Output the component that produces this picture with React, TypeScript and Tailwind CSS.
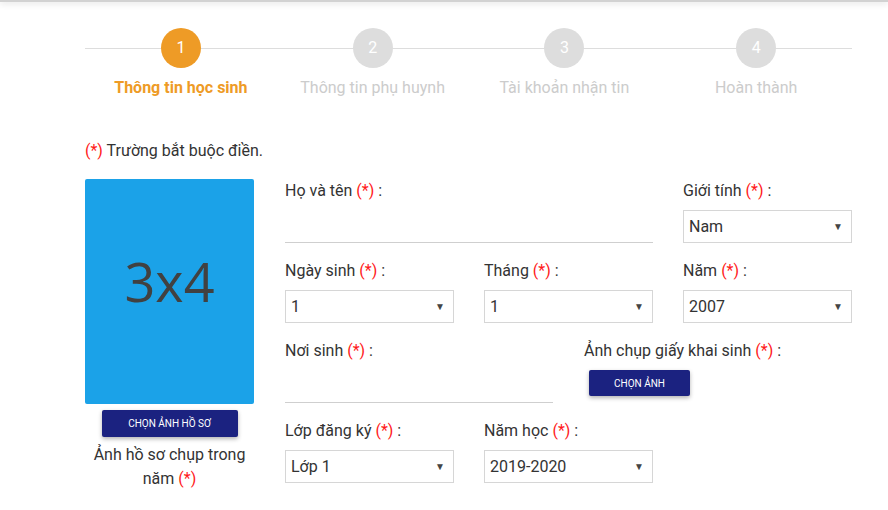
import React from "react";

const Req = () => <span className="text-[#ff1a1a]">(*)</span>;

const Label = ({ text }: { text: string }) => (
  <div className="h-6 text-[16px] leading-6 text-[#333] whitespace-nowrap">
    {text} <Req /> :
  </div>
);

const Select = ({ value }: { value: string }) => (
  <div className="mt-[7px] flex h-[33px] items-center justify-between border border-[#d6d6d6] pl-[5px] pr-[8px] text-[16px] text-[#333]">
    <span>{value}</span>
    <span className="text-[10px] text-[#444]">▼</span>
  </div>
);

const Underline = () => <div className="mt-[7px] h-[33px] border-b border-[#cfcfcf]" />;

const steps = [
  { n: "1", t: "Thông tin học sinh", active: true },
  { n: "2", t: "Thông tin phụ huynh", active: false },
  { n: "3", t: "Tài khoản nhận tin", active: false },
  { n: "4", t: "Hoàn thành", active: false },
];

export default function App() {
  return (
    <div className="min-h-[510px] w-[888px] overflow-hidden bg-white font-['Roboto',sans-serif] text-[#333]">
      <div className="h-[2px] bg-[#d2d2d2] shadow-[0_1px_6px_rgba(0,0,0,0.22)]" />
      <div className="ml-[85px] w-[767px] pt-[26px]">
        <div className="relative grid grid-cols-4">
          <div className="absolute left-0 right-0 top-[20px] h-px bg-[#dddddd]" />
          {steps.map((s) => (
            <div key={s.n} className="flex flex-col items-center">
              <div
                className={
                  s.active
                    ? "relative z-10 flex h-10 w-10 items-center justify-center rounded-full bg-[#ee9b26] text-[16px] text-white"
                    : "relative z-10 flex h-10 w-10 items-center justify-center rounded-full bg-[#dddddd] text-[16px] text-white"
                }
              >
                {s.n}
              </div>
              <div
                className={
                  s.active
                    ? "mt-[8px] text-[16px] font-bold leading-6 text-[#ee9b26]"
                    : "mt-[8px] text-[16px] leading-6 text-[#cccccc]"
                }
              >
                {s.t}
              </div>
            </div>
          ))}
        </div>

        <div className="mt-[39px] text-[16px] leading-6 text-[#333]">
          <Req /> Trường bắt buộc điền.
        </div>

        <div className="mt-4 flex gap-[31px]">
          <div className="flex w-[169px] shrink-0 flex-col items-center">
            <div className="flex h-[225px] w-full items-center justify-center rounded-[2px] bg-[#1ba2e8] pb-[20px] font-['Open_Sans',sans-serif] text-[54px] text-[#414141]">
              3x4
            </div>
            <button className="mt-[6px] h-[27px] w-[136px] rounded-[2px] bg-[#1b2280] text-[10px] text-white shadow-[0_2px_4px_rgba(0,0,0,0.3)]">
              CHỌN ẢNH HỒ SƠ
            </button>
            <div className="mt-[6px] px-2 text-center text-[16px] leading-6 text-[#333]">
              <div>Ảnh hồ sơ chụp trong</div>
              <div>
                năm <Req />
              </div>
            </div>
          </div>

          <div className="flex flex-1 flex-col gap-4">
            <div className="grid grid-cols-3 gap-x-[30px]">
              <div className="col-span-2">
                <Label text="Họ và tên" />
                <Underline />
              </div>
              <div>
                <Label text="Giới tính" />
                <Select value="Nam" />
              </div>
            </div>

            <div className="grid grid-cols-3 gap-x-[30px]">
              <div>
                <Label text="Ngày sinh" />
                <Select value="1" />
              </div>
              <div>
                <Label text="Tháng" />
                <Select value="1" />
              </div>
              <div>
                <Label text="Năm" />
                <Select value="2007" />
              </div>
            </div>

            <div className="grid grid-cols-2 gap-x-[31px]">
              <div>
                <Label text="Nơi sinh" />
                <Underline />
              </div>
              <div>
                <Label text="Ảnh chụp giấy khai sinh" />
                <button className="ml-[5px] mt-[7px] h-[26px] w-[101px] rounded-[2px] bg-[#1b2280] text-[10px] text-white shadow-[0_2px_4px_rgba(0,0,0,0.3)]">
                  CHỌN ẢNH
                </button>
              </div>
            </div>

            <div className="grid grid-cols-3 gap-x-[30px]">
              <div>
                <Label text="Lớp đăng ký" />
                <Select value="Lớp 1" />
              </div>
              <div>
                <Label text="Năm học" />
                <Select value="2019-2020" />
              </div>
            </div>
          </div>
        </div>
      </div>
    </div>
  );
}
